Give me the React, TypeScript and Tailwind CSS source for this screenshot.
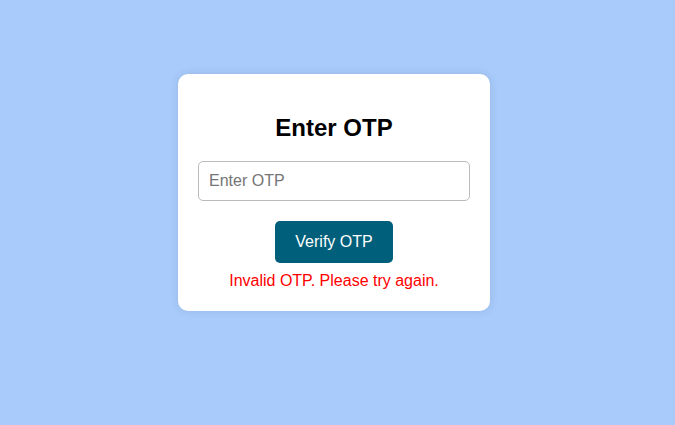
import { useState } from 'react';

export default function App() {
  const [otp, setOtp] = useState('');

  return (
    <div className="flex h-[425px] w-full items-center justify-center bg-[#a8cbfb] pb-[41px] pr-[7px] font-['Liberation_Sans',Arial,sans-serif]">
      <div className="w-[312px] rounded-[10px] bg-white p-5 text-center shadow-[0_0_10px_rgba(0,0,0,0.1)]">
        <h2 className="my-5 text-2xl font-bold leading-[27.6px] text-black">Enter OTP</h2>
        <input
          type="text"
          value={otp}
          onChange={(e) => setOtp(e.target.value)}
          placeholder="Enter OTP"
          className="block h-10 w-full rounded-[5px] border border-[#bbbbbb] px-[10px] text-base text-black outline-none placeholder:text-[#757575]"
        />
        <button className="mt-5 h-[42px] rounded-[5px] bg-[#005f7a] px-5 text-base text-white">
          Verify OTP
        </button>
        <p className="mt-[9px] text-base leading-[18.4px] text-[#ff0000]">Invalid OTP. Please try again.</p>
      </div>
    </div>
  );
}
